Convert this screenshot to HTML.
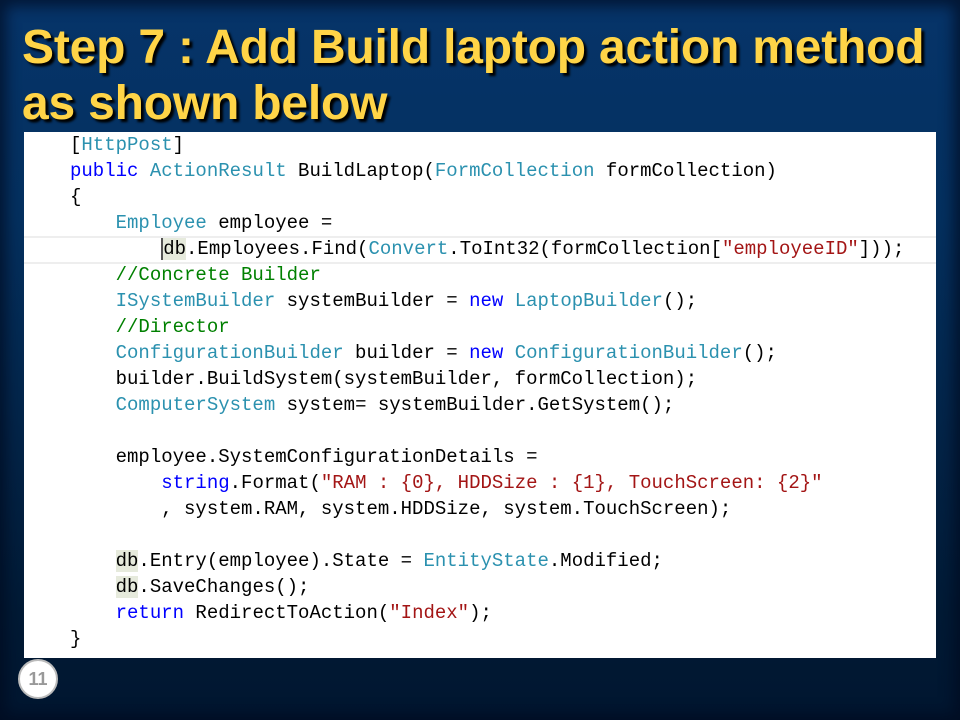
<!DOCTYPE html>
<html><head><meta charset="utf-8"><style>
html,body{margin:0;padding:0}
body{width:960px;height:720px;overflow:hidden;position:relative;
background:linear-gradient(180deg,#063469 0%,#04305f 30%,#032448 60%,#011a35 85%,#011630 100%);
font-family:"Liberation Sans",sans-serif}
.frame{position:absolute;inset:0;box-shadow:inset 0 0 14px 6px rgba(0,10,30,.7)}
.title{position:absolute;left:22px;top:20px;color:#ffd447;font-weight:bold;font-size:48px;line-height:56px;
text-shadow:3px 3px 2px #000;white-space:nowrap;letter-spacing:-0.2px}
.code{position:absolute;left:24px;top:132px;width:912px;height:526px;background:#fff}
pre{position:absolute;left:46px;top:0;margin:0;font-family:"Liberation Mono",monospace;font-size:19px;line-height:26px;color:#000}
.t{color:#2b91af}.k{color:#0000ff}.c{color:#008000}.s{color:#a31515}
.hl{background:#e6eadc}
.ln{position:absolute;left:0;width:912px;height:24px;border-top:2px solid #eeeeee;border-bottom:2px solid #eeeeee;top:236px}
.num{position:absolute;left:18px;top:659px;width:40px;height:40px;border-radius:50%;background:#fff;border:2px solid #bbb;
box-sizing:border-box;color:#999;font-weight:bold;font-size:18px;text-align:center;line-height:36px}
</style></head><body>
<div class="frame"></div>
<div class="title">Step 7 : Add Build laptop action method<br>as shown below</div>
<div class="code">
<div class="ln" style="top:104px"></div>
<pre>[<span class="t">HttpPost</span>]
<span class="k">public</span> <span class="t">ActionResult</span> BuildLaptop(<span class="t">FormCollection</span> formCollection)
{
    <span class="t">Employee</span> employee =
        <span class="hl" style="border-left:2px solid #555">db</span>.Employees.Find(<span class="t">Convert</span>.ToInt32(formCollection[<span class="s">"employeeID"</span>]));
    <span class="c">//Concrete Builder</span>
    <span class="t">ISystemBuilder</span> systemBuilder = <span class="k">new</span> <span class="t">LaptopBuilder</span>();
    <span class="c">//Director</span>
    <span class="t">ConfigurationBuilder</span> builder = <span class="k">new</span> <span class="t">ConfigurationBuilder</span>();
    builder.BuildSystem(systemBuilder, formCollection);
    <span class="t">ComputerSystem</span> system= systemBuilder.GetSystem();

    employee.SystemConfigurationDetails =
        <span class="k">string</span>.Format(<span class="s">"RAM : {0}, HDDSize : {1}, TouchScreen: {2}"</span>
        , system.RAM, system.HDDSize, system.TouchScreen);

    <span class="hl">db</span>.Entry(employee).State = <span class="t">EntityState</span>.Modified;
    <span class="hl">db</span>.SaveChanges();
    <span class="k">return</span> RedirectToAction(<span class="s">"Index"</span>);
}</pre>
</div>
<div class="num">11</div>
</body></html>
